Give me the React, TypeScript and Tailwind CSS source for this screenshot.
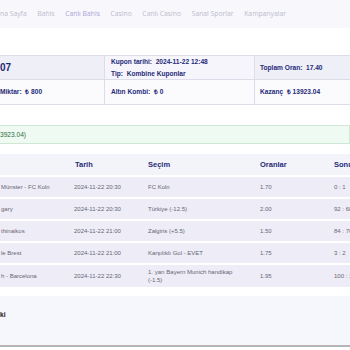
// Kupon detay sayfası (sola kaydırılmış görünüm)

const navItems = [
  { label: "na Sayfa", active: false },
  { label: "Bahis", active: false },
  { label: "Canlı Bahis", active: true },
  { label: "Casino", active: false },
  { label: "Canlı Casino", active: false },
  { label: "Sanal Sporlar", active: false },
  { label: "Kampanyalar", active: false },
];

interface Bet {
  match: string;
  date: string;
  pick: string;
  odd: string;
  score: string;
}

const bets: Bet[] = [
  { match: "Münster - FC Koln", date: "2024-11-22 20:30", pick: "FC Koln", odd: "1.70", score: "0 : 1" },
  { match: "gary", date: "2024-11-22 20:30", pick: "Türkiye (-12.5)", odd: "2.00", score: "92 : 68" },
  { match: "thinaikos", date: "2024-11-22 21:00", pick: "Zalgiris (+5.5)", odd: "1.50", score: "84 : 76" },
  { match: "le Brest", date: "2024-11-22 21:00", pick: "Karşılıklı Gol - EVET", odd: "1.75", score: "3 : 2" },
  { match: "h - Barcelona", date: "2024-11-22 22:30", pick: "1. yarı Bayern Munich handikap (-1.5)", odd: "1.95", score: "100 : 102" },
];

const cols = "grid grid-cols-[73px_74px_112px_74px_80px]";

export default function App() {
  return (
    <div className="w-[350px] h-[350px] overflow-hidden bg-white font-['Liberation_Sans',Arial,sans-serif]">
      {/* ===== NAV ===== */}
      <nav className="h-[28px] bg-[#f7f7fc] flex items-center gap-[10.6px] whitespace-nowrap font-['Open_Sans',sans-serif] text-[6.8px] text-[#bdbdcc]">
        {navItems.map((item) => (
          <span key={item.label} className={item.active ? "text-[#aba6d8]" : ""}>
            {item.label}
          </span>
        ))}
      </nav>

      {/* ===== KUPON BILGISI ===== */}
      <div className="mt-[27px] border-y border-[#dddde9] text-[6.6px] font-bold text-[#1f2a78] whitespace-nowrap">
        <div className="grid grid-cols-[104px_150px_96px] h-[24px] bg-[#efeff8] border-b border-[#dddde9]">
          <div className="flex items-center text-[10px]">07</div>
          <div className="flex flex-col justify-center gap-[2px] pl-[6px] border-l border-[#dddde9] bg-[#f5f5fb]">
            <span>Kupon tarihi:&nbsp; 2024-11-22 12:48</span>
            <span>Tip:&nbsp; Kombine Kuponlar</span>
          </div>
          <div className="flex items-center pl-[5px] border-l border-[#dddde9]">Toplam Oran:&nbsp; 17.40</div>
        </div>
        <div className="grid grid-cols-[104px_150px_96px] h-[24px] bg-[#fbfbfe]">
          <div className="flex items-center">Miktar:&nbsp; ₺ 800</div>
          <div className="flex items-center pl-[6px] border-l border-[#dddde9]">Altın Kombi:&nbsp; ₺ 0</div>
          <div className="flex items-center pl-[5px] border-l border-[#dddde9]">Kazanç&nbsp; ₺ 13923.04</div>
        </div>
      </div>

      {/* ===== DURUM KUTUSU ===== */}
      <div className="mt-[20px] h-[19px] flex items-center border border-l-0 border-[#cfe8d6] bg-[#effaf2] text-[6.6px] text-[#2a6f40]">
        3923.04)
      </div>

      {/* ===== MAC TABLOSU ===== */}
      <div className="mt-[10px] whitespace-nowrap">
        <div className={`${cols} h-[21px] items-center bg-[#f3f3fa] text-[7.5px] font-bold text-[#1f2a78]`}>
          <span></span>
          <span className="pl-[2px]">Tarih</span>
          <span className="pl-[1px]">Seçim</span>
          <span className="pl-[1px]">Oranlar</span>
          <span className="pl-[1px]">Sonuç</span>
        </div>
        {bets.map((bet) => (
          <div
            key={bet.match}
            className={`${cols} min-h-[22px] py-[3px] items-center bg-[#eeecf7] border-t-2 border-white text-[6px] text-[#666675]`}
          >
            <span className="pl-[1px]">{bet.match}</span>
            <span className="pl-[1px]">{bet.date}</span>
            <span className="pl-[1px] pr-[18px] whitespace-normal leading-[8px]">{bet.pick}</span>
            <span className="pl-[1px]">{bet.odd}</span>
            <span className="pl-[1px]">{bet.score}</span>
          </div>
        ))}
      </div>

      {/* ===== ALT BOLUM ===== */}
      <div className="mt-[9px] h-[51px] bg-[#f6f7fc] border-b-2 border-[#b5b5b8] pt-[4px]">
        <span className="text-[6.6px] font-bold text-[#111111]">ki</span>
      </div>
    </div>
  );
}
